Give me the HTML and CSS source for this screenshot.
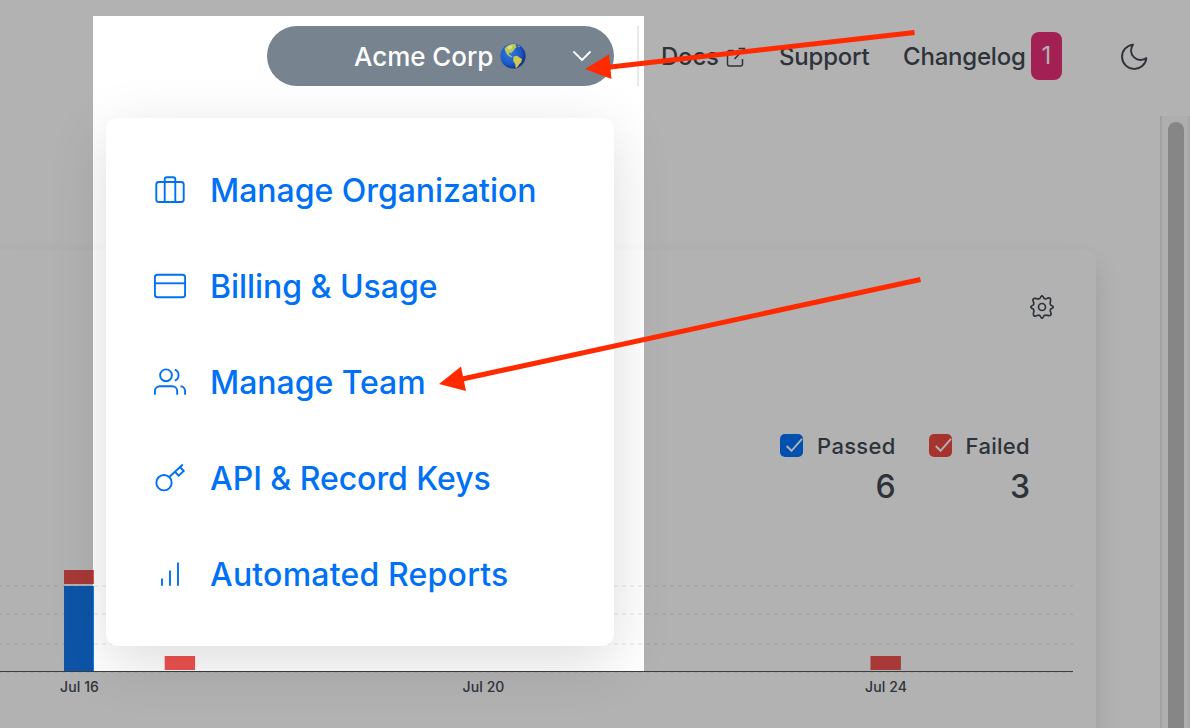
FILE: index.html
```html
<!DOCTYPE html>
<html lang="en">
<head>
<meta charset="utf-8">
<title>Acme Corp</title>
<link rel="stylesheet" href="styles.css">
</head>
<body>
<div class="app">
  <header class="topbar">
    <div class="org">
      <button class="org-button">
        <span class="org-name">Acme Corp</span>
        <svg class="globe" viewBox="0 0 26 26">
          <defs>
            <radialGradient id="sea" cx=".38" cy=".4" r=".65"><stop offset="0" stop-color="#2b7be8"/><stop offset=".65" stop-color="#1f57c6"/><stop offset="1" stop-color="#123080"/></radialGradient>
          </defs>
          <circle cx="13" cy="13" r="12.6" fill="url(#sea)"/>
          <path d="M4.5 5.5C7 2.500 10 1 13.500.8l3 .7-1 1.500 1.500 1-2 1.500-1.500 2.500-2.500 2-1.500-.5-.5 2 2.500 1.500 1 1.500-2.500-.8L7 11.500 5.500 8.500z" fill="#b8c95a"/>
          <path d="M7 4.500l3-2 2.500.5-1 2.500-2.500 1z" fill="#e3dc8a"/>
          <path d="M13.500 13.500l3.500-.7 2.500 1.700 2.500 1.500-.7 3-2.300 2.500-1.500 2.500-1.800 1-.5-4-2-3z" fill="#cfca4f"/>
          <path d="M17 2l3 1.500-1 .8z" fill="#b8c95a"/>
        </svg>
        <svg class="chevron" viewBox="0 0 20 12"><path d="M2 2l8 8 8-8"/></svg>
      </button>
      <nav class="menu">
        <a class="menu-item"><svg class="icon" viewBox="0 0 32 32"><rect x="2.300" y="8" width="27.400" height="20" rx="2.500"/><path d="M10.700 28V5.500a2.200 2.200 0 0 1 2.200-2.200h6.200A2.200 2.200 0 0 1 21.300 5.500v22.500"/></svg><span>Manage Organization</span></a>
        <a class="menu-item"><svg class="icon" viewBox="0 0 32 32"><rect x=".9" y="4.800" width="30.200" height="22.400" rx="2.500"/><path d="M.8 13.300h30.400"/></svg><span>Billing &amp; Usage</span></a>
        <a class="menu-item"><svg class="icon" viewBox="0 0 32 32"><circle cx="12" cy="9.300" r="5.900"/><path d="M.9 28.700v-3.400a5 5 0 0 1 5-5h12.300a5 5 0 0 1 5 5v3.400M20.800 3.700a5.900 5.900 0 0 1 0 11M26.500 20.300a5 5 0 0 1 4.600 5v3.400"/></svg><span>Manage Team</span></a>
        <a class="menu-item"><svg class="icon" viewBox="0 0 32 32"><circle cx="10" cy="20.700" r="7.700"/><path d="M15.300 15L28.800 2.500M26.200 5l3.500 4-5 4.700-4-4.200"/></svg><span>API &amp; Record Keys</span></a>
        <a class="menu-item"><svg class="icon" viewBox="0 0 32 32"><path d="M8 20.500v7.300M16 12.500v15.300M24 4.500v23.300"/></svg><span class="wide">Automated Reports</span></a>
      </nav>
    </div>
    <div class="divider"></div>
    <a class="nav-link docs">Docs<svg class="external" viewBox="0 0 20 20"><path d="M8 3.500H3.500A2 2 0 0 0 1.500 5.500v11.500a2 2 0 0 0 2 2H14.500a2 2 0 0 0 2-2V12M12.500 1.500H18.500V7M18.500 1.500L8.500 12"/></svg></a>
    <a class="nav-link support">Support</a>
    <a class="nav-link changelog">Changelog<span class="badge">1</span></a>
    <svg class="moon" viewBox="0 0 28 28"><path d="M13 1.600A12.200 12.200 0 1 0 26.400 15.100 9.600 9.600 0 0 1 13 1.600z"/></svg>
  </header>
  <div class="body">
    <main class="content">
      <section class="card">
        <div class="card-tools">
          <svg class="gear" viewBox="0 0 24 24"><circle cx="12" cy="12" r="3.500"/><path d="M10 3.300Q12-1.700 14 3.300Q15 4.200 16.700 3.500Q21.500 1.500 20.400 6.500Q19.800 9 20.700 10Q25.700 12 20.700 14Q19.800 15 20.500 16.700Q22.500 21.500 17.500 20.400Q15 19.800 14 20.700Q12 25.700 10 20.700Q9 19.800 7.300 20.500Q2.500 22.500 3.600 17.500Q4.200 15 3.300 14Q-1.700 12 3.300 10Q4.200 9 3.500 7.300Q1.500 2.500 6.500 3.600Q9 4.200 10 3.300z"/></svg>
        </div>
        <div class="legend">
          <div class="series"><div class="series-head"><span class="check passed"><svg viewBox="0 0 24 24"><path d="M7 12.500l5 5L23 5"/></svg></span>Passed</div><div class="count">6</div></div>
          <div class="series"><div class="series-head"><span class="check failed"><svg viewBox="0 0 24 24"><path d="M7 12.500l5 5L23 5"/></svg></span>Failed</div><div class="count">3</div></div>
        </div>
        <svg class="chart" viewBox="0 0 1096 113">
          <path class="grid" d="M-2 26h1075M-2 54h1075M-2 84h1075M-2 112h1075"/>
          <rect class="bar-failed" x="64" y="10" width="30" height="14"/>
          <rect class="bar-passed" x="64" y="26" width="30" height="85"/>
          <rect class="bar-failed" x="164.700" y="96" width="30.400" height="14"/>
          <rect class="bar-failed" x="870.500" y="96" width="30.400" height="14"/>
          <path class="axis" d="M0 111.500h1073"/>
        </svg>
        <div class="dates"><span>Jul 16</span><span>Jul 20</span><span>Jul 24</span></div>
      </section>
    </main>
    <div class="scrollbar"><div class="thumb"></div></div>
  </div>
  <div class="spotlight"></div>
  <svg class="arrows" viewBox="0 0 1190 728">
    <path class="shaft" d="M914.500 32.500L606 67.500M920.500 279.500L460 379.500"/>
    <path class="tip" d="M585 69L609 54.500L611.500 79zM439 384L461 366.500L466 391z"/>
  </svg>
</div>
</body>
</html>
```

FILE: styles.css
```css
* { box-sizing: border-box; }
body { margin: 0; font-family: Inter, "Liberation Sans", sans-serif; color: #434a54; background: #fff; }
svg { display: block; fill: none; flex: none; }
.app { position: relative; width: 1190px; height: 728px; overflow: hidden; display: flex; flex-direction: column; }
.topbar { position: relative; z-index: 2; height: 116px; flex: none; display: flex; padding: 26px 42px 0 267px; }
.org { position: relative; width: 347px; height: 60px; }
.org-button { position: relative; z-index: 1; width: 100%; height: 60px; border: 0; border-radius: 30px; background: #77838f; color: #fff; font: 500 26px Inter, sans-serif; letter-spacing: -.05px; display: flex; align-items: center; padding: 0 22px 0 87px; white-space: nowrap; }
.globe { width: 26px; height: 26px; margin-left: 7px; }
.org-name { width: 139px; }
.chevron { width: 20px; height: 12px; margin-left: auto; stroke: #fff; stroke-width: 1.800; stroke-linecap: round; stroke-linejoin: round; }
.menu { position: absolute; top: 92px; right: 0; width: 508px; height: 528px; padding: 24px 48px; background: #fff; border-radius: 12px; box-shadow: 0 16px 60px rgba(0, 0, 0, .14); }
.menu-item { height: 96px; display: flex; align-items: center; gap: 24px; color: #0071f5; font-size: 32px; font-weight: 500; letter-spacing: -.04px; white-space: nowrap; }
.icon { width: 32px; height: 32px; stroke: #0071f5; stroke-width: 1.900; }
.menu-item .wide { letter-spacing: .2px; }
.divider { width: 2px; height: 60px; margin-left: 23px; background: #e8e8e8; }
.nav-link { height: 60px; display: flex; align-items: center; font-size: 24px; font-weight: 500; letter-spacing: -.2px; white-space: nowrap; }
.docs { width: 118px; margin-left: 22px; }
.external { width: 20px; height: 20px; margin: 2px 0 0 7px; stroke: #434a54; stroke-width: 1.500; }
.support { width: 124px; }
.changelog { width: 217px; }
.badge { width: 31px; height: 48px; margin: 0 0 0 5px; border-radius: 8px; background: #e82f77; color: #fff; text-align: center; line-height: 48px; font-weight: 400; }
.moon { width: 28px; height: 28px; margin-top: 17px; stroke: #434a54; stroke-width: 1.900; stroke-linejoin: round; }
.body { flex: 1; display: flex; }
.content { flex: 1; padding: 134px 64px 0 0; }
.card { height: 600px; border-radius: 0 12px 12px 0; background: #fff; box-shadow: 0 12px 24px rgba(0, 0, 0, .12); }
.card-tools { height: 182px; padding: 45px 42px 0 0; display: flex; justify-content: flex-end; }
.gear { width: 24px; height: 24px; stroke: #434a54; stroke-width: 1.700; }
.legend { height: 128px; display: flex; justify-content: flex-end; gap: 33px; padding-right: 66px; }
.series-head { display: flex; align-items: center; height: 27px; font-size: 22px; font-weight: 450; letter-spacing: .3px; }
.check { width: 23px; height: 23px; margin: 0 14px 1px 0; border-radius: 5px; overflow: hidden; }
.check svg { width: 23px; height: 23px; stroke: #fff; stroke-width: 2; }
.passed { background: #0073fb; }
.failed { background: #ef4943; }
.count { margin-top: 8px; text-align: right; font-size: 32px; line-height: 40px; font-weight: 500; }
.chart { width: 1096px; height: 113px; overflow: visible; }
.grid { stroke: #f1f1f1; stroke-width: 2; stroke-dasharray: 4 4; }
.bar-failed { fill: #ef5350; }
.bar-passed { fill: #157af0; }
.axis { stroke: #55585c; stroke-width: 1; }
.dates { display: flex; gap: 364px; padding-left: 60px; margin-top: 4px; font-size: 14px; line-height: 20px; letter-spacing: .1px; font-weight: 450; }
.dates span { width: 38.500px; white-space: nowrap; }
.scrollbar { width: 30px; padding: 6px 0 0 6px; border-left: 2px solid #e6e6e6; border-right: 2px solid #f0f0f0; background: #fafafa; }
.thumb { width: 16px; height: 640px; border-radius: 8px; background: #c1c1c1; }
.spotlight { position: absolute; z-index: 3; left: 93px; top: 16px; width: 551px; height: 655px; box-shadow: 0 0 0 1200px rgba(0, 0, 0, .3); }
.arrows { position: absolute; z-index: 4; left: 0; top: 0; width: 1190px; height: 728px; }
.shaft { stroke: #ff2a00; stroke-width: 5; }
.tip { fill: #ff2a00; }
```
